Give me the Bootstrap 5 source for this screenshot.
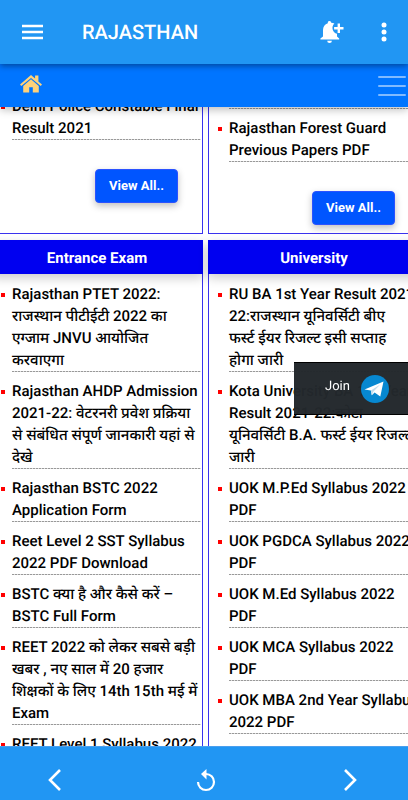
<!DOCTYPE html>
<html lang="hi">
<head>
<meta charset="utf-8">
<meta name="viewport" content="width=device-width, initial-scale=1">
<title>Rajasthan</title>
<link href="https://cdn.jsdelivr.net/npm/bootstrap@5.3.0/dist/css/bootstrap.min.css" rel="stylesheet">
<style>
body { font-family: Roboto, "Noto Sans", "Noto Sans Devanagari", sans-serif; font-size: 15px; line-height: 22px; color: #000; background: #fff; text-rendering: geometricPrecision; }
button svg, a svg { display: block; }
.app-bar { height: 64px; padding: 0 16px 0 22px; background: #2196f3; box-shadow: 0 2px 6px rgba(0,0,0,.4); z-index: 3; }
.app-title { font-size: 20px; line-height: 24px; font-weight: 500; margin-left: 39px; }
.site-bar { height: 43px; padding: 0 2px 0 19px; background: #0075ff; box-shadow: 0 3px 8px rgba(0,0,0,.25); z-index: 2; }
.bottom-bar { height: 54px; padding: 14px 40px 0 44px; background: #2196f3; border-top: 1px solid #4a9fee; z-index: 2; }
.boards { display: grid; grid-template-columns: 1fr 1fr; gap: 6px 5px; margin: 0 -12px 0 -9px; }
.board { border: 1px solid #3a32ee; min-width: 0; }
.board.is-cut { border-top: 0; display: flex; flex-direction: column; height: 127px; }
.board-title { background: #0000f0; color: #fff; font-size: 15px; line-height: 22px; font-weight: 700; padding: 7px 0 5px; margin: -1px -1px 9px; text-align: center; box-shadow: 0 4px 10px rgba(0,0,0,.2); height: 34px; }
.posts { list-style: none; margin: 0; padding: 0 1px 0 20px; }
.posts li { position: relative; margin-bottom: 8px; white-space: nowrap; }
.posts li::after, .cut-b::before { content: ""; display: block; height: 1px; background: repeating-linear-gradient(90deg, #999 0 2px, #ddd 2px 3px); }
.posts li::before { content: ""; position: absolute; left: -11px; top: 10px; width: 4px; height: 4px; background: #f00; }
.posts a { color: #000; font-weight: 500; text-decoration: none; display: block; }
.cut-a { margin-top: -12px; }
.cut-b { margin-top: 1px; }
.cut-b::before { margin-bottom: 8px; }
.view-all { font-size: 13px; line-height: 20px; font-weight: 700; color: #fff; background: #0055ff; border: 1px solid #2b52ff; border-radius: 4px; padding: 6px 13px; margin: 0 24px 30px auto; box-shadow: 0 3px 7px rgba(0,0,0,.25); }
.view-all.wide { margin-bottom: 8px; }
.join { position: fixed; right: 0; top: 362px; width: 114px; height: 53px; padding: 0 19px 0 31px; background: rgba(35,40,44,.98); border-top: 1px solid #000; border-bottom: 1px solid #000; color: #fff; font-size: 13px; text-decoration: none; z-index: 4; }
</style>
</head>
<body>
<div class="d-flex flex-column vh-100 overflow-hidden">
  <header class="app-bar d-flex align-items-center flex-shrink-0 position-relative text-white">
    <button class="btn p-0 border-0 text-white" aria-label="Menu"><svg width="21" height="16" viewBox="0 0 21 16"><path d="M0 2h21M0 8h21M0 14h21" stroke="#fff" stroke-width="2.400"/></svg></button>
    <h1 class="app-title mb-0">RAJASTHAN</h1>
    <button class="btn p-0 border-0 ms-auto me-4" aria-label="Notifications"><svg width="24" height="24" viewBox="0 0 24 24" fill="#fff"><path d="M9.500 1c-1 0-1.700.700-1.700 1.700v.600C4.800 4.200 3 6.800 3 10v6.500L.400 18.500v1h18.800v-1L17 16.500v-2.700a6 6 0 0 1-2.600-10.200 7 7 0 0 0-3.200-.800C11.200 1.700 10.500 1 9.500 1zM7.200 20.700h4.700a2.350 2.350 0 0 1-4.700 0z"/><path d="M18.800 3.500v9.400M14.100 8.200h9.400" stroke="#fff" stroke-width="2.400"/></svg></button>
    <button class="btn p-0 border-0 ms-2" aria-label="More options"><svg width="16" height="22" viewBox="0 0 16 22" fill="#fff"><circle cx="8" cy="4" r="2.500"/><circle cx="8" cy="11" r="2.500"/><circle cx="8" cy="18" r="2.500"/></svg></button>
  </header>
  <nav class="site-bar d-flex align-items-center justify-content-between flex-shrink-0 position-relative">
    <a href="#" aria-label="Home" class="mb-1"><svg width="24" height="20" viewBox="0 0 24 20" fill="#ffd27a"><path d="M12 1 1 10.500l1.300 1.600L12 4l9.700 8.100 1.300-1.600-3.600-3.100V1.500h-3.300v3.100z"/><path d="M12 5.300 4.200 12v6.600h6V13.200h3.600v5.400h6V12z"/></svg></a>
    <button class="btn p-0 border-0" aria-label="Site menu"><svg width="28" height="22" viewBox="0 0 28 22"><path d="M1 2h26M1 11h26M1 20h26" stroke="#80baff" stroke-width="2" stroke-linecap="round"/></svg></button>
  </nav>
  <main class="flex-grow-1 overflow-hidden">
    <div class="boards">
      <section class="board is-cut">
        <ul class="posts cut-a"><li><a href="#">Delhi Police Constable Final<br>Result 2021</a></li></ul>
        <button class="btn view-all mt-auto">View All..</button>
      </section>
      <section class="board is-cut">
        <ul class="posts cut-b"><li><a href="#">Rajasthan Forest Guard<br>Previous Papers PDF</a></li></ul>
        <button class="btn view-all wide mt-auto">View All..</button>
      </section>
      <section class="board">
        <h2 class="board-title">Entrance Exam</h2>
        <ul class="posts">
          <li><a href="#">Rajasthan PTET 2022:<br>राजस्थान पीटीईटी 2022 का<br>एग्जाम JNVU आयोजित<br>करवाएगा</a></li>
          <li><a href="#">Rajasthan AHDP Admission<br>2021-22: वेटरनरी प्रवेश प्रक्रिया<br>से संबंधित संपूर्ण जानकारी यहां से<br>देखे</a></li>
          <li><a href="#">Rajasthan BSTC 2022<br>Application Form</a></li>
          <li><a href="#">Reet Level 2 SST Syllabus<br>2022 PDF Download</a></li>
          <li><a href="#">BSTC क्या है और कैसे करें –<br>BSTC Full Form</a></li>
          <li><a href="#">REET 2022 को लेकर सबसे बड़ी<br>खबर , नए साल में 20 हजार<br>शिक्षकों के लिए 14th 15th मई में<br>Exam</a></li>
          <li><a href="#">REET Level 1 Syllabus 2022</a></li>
        </ul>
      </section>
      <section class="board">
        <h2 class="board-title">University</h2>
        <ul class="posts">
          <li><a href="#">RU BA 1st Year Result 2021-<br>22:राजस्थान यूनिवर्सिटी बीए<br>फर्स्ट ईयर रिजल्ट इसी सप्ताह<br>होगा जारी</a></li>
          <li><a href="#">Kota University BA 1st Year<br>Result 2021-22:कोटा<br>यूनिवर्सिटी B.A. फर्स्ट ईयर रिजल्ट<br>जारी</a></li>
          <li><a href="#">UOK M.P.Ed Syllabus 2022<br>PDF</a></li>
          <li><a href="#">UOK PGDCA Syllabus 2022<br>PDF</a></li>
          <li><a href="#">UOK M.Ed Syllabus 2022<br>PDF</a></li>
          <li><a href="#">UOK MCA Syllabus 2022<br>PDF</a></li>
          <li><a href="#">UOK MBA 2nd Year Syllabus<br>2022 PDF</a></li>
        </ul>
      </section>
    </div>
  </main>
  <footer class="bottom-bar d-flex align-items-center justify-content-between flex-shrink-0 position-relative">
    <button class="btn p-0 border-0" aria-label="Back"><svg width="24" height="24" viewBox="0 0 24 24" fill="none" stroke="#fff" stroke-width="2.600"><path d="M16 1 6 11l10 10"/></svg></button>
    <button class="btn p-0 border-0" aria-label="Reload"><svg width="24" height="24" viewBox="0 0 24 24"><path d="M12 5a8 8 0 1 1-8 8" fill="none" stroke="#fff" stroke-width="2.200"/><path d="M12.500 0v10.500L7 5z" fill="#fff"/></svg></button>
    <button class="btn p-0 border-0" aria-label="Forward"><svg width="24" height="24" viewBox="0 0 24 24" fill="none" stroke="#fff" stroke-width="2.600"><path d="m1 1 10 10L1 21"/></svg></button>
  </footer>
</div>
<a href="#" class="join d-flex align-items-center justify-content-between"><span class="mb-1">Join</span><svg width="28" height="28" viewBox="0 0 28 28"><circle cx="14" cy="14" r="14" fill="#0788d1"/><path d="M3.500 14.500 22.500 6.500 19.300 21.500l-5.700-4-2.800 2.700-.900-4.800z" fill="#fff"/><path d="m9.900 15.400 9.600-6.200-7.200 7.500-1.500 3.500z" fill="#c5dcea"/></svg></a>
<script src="https://cdn.jsdelivr.net/npm/bootstrap@5.3.0/dist/js/bootstrap.bundle.min.js"></script>
</body>
</html>
